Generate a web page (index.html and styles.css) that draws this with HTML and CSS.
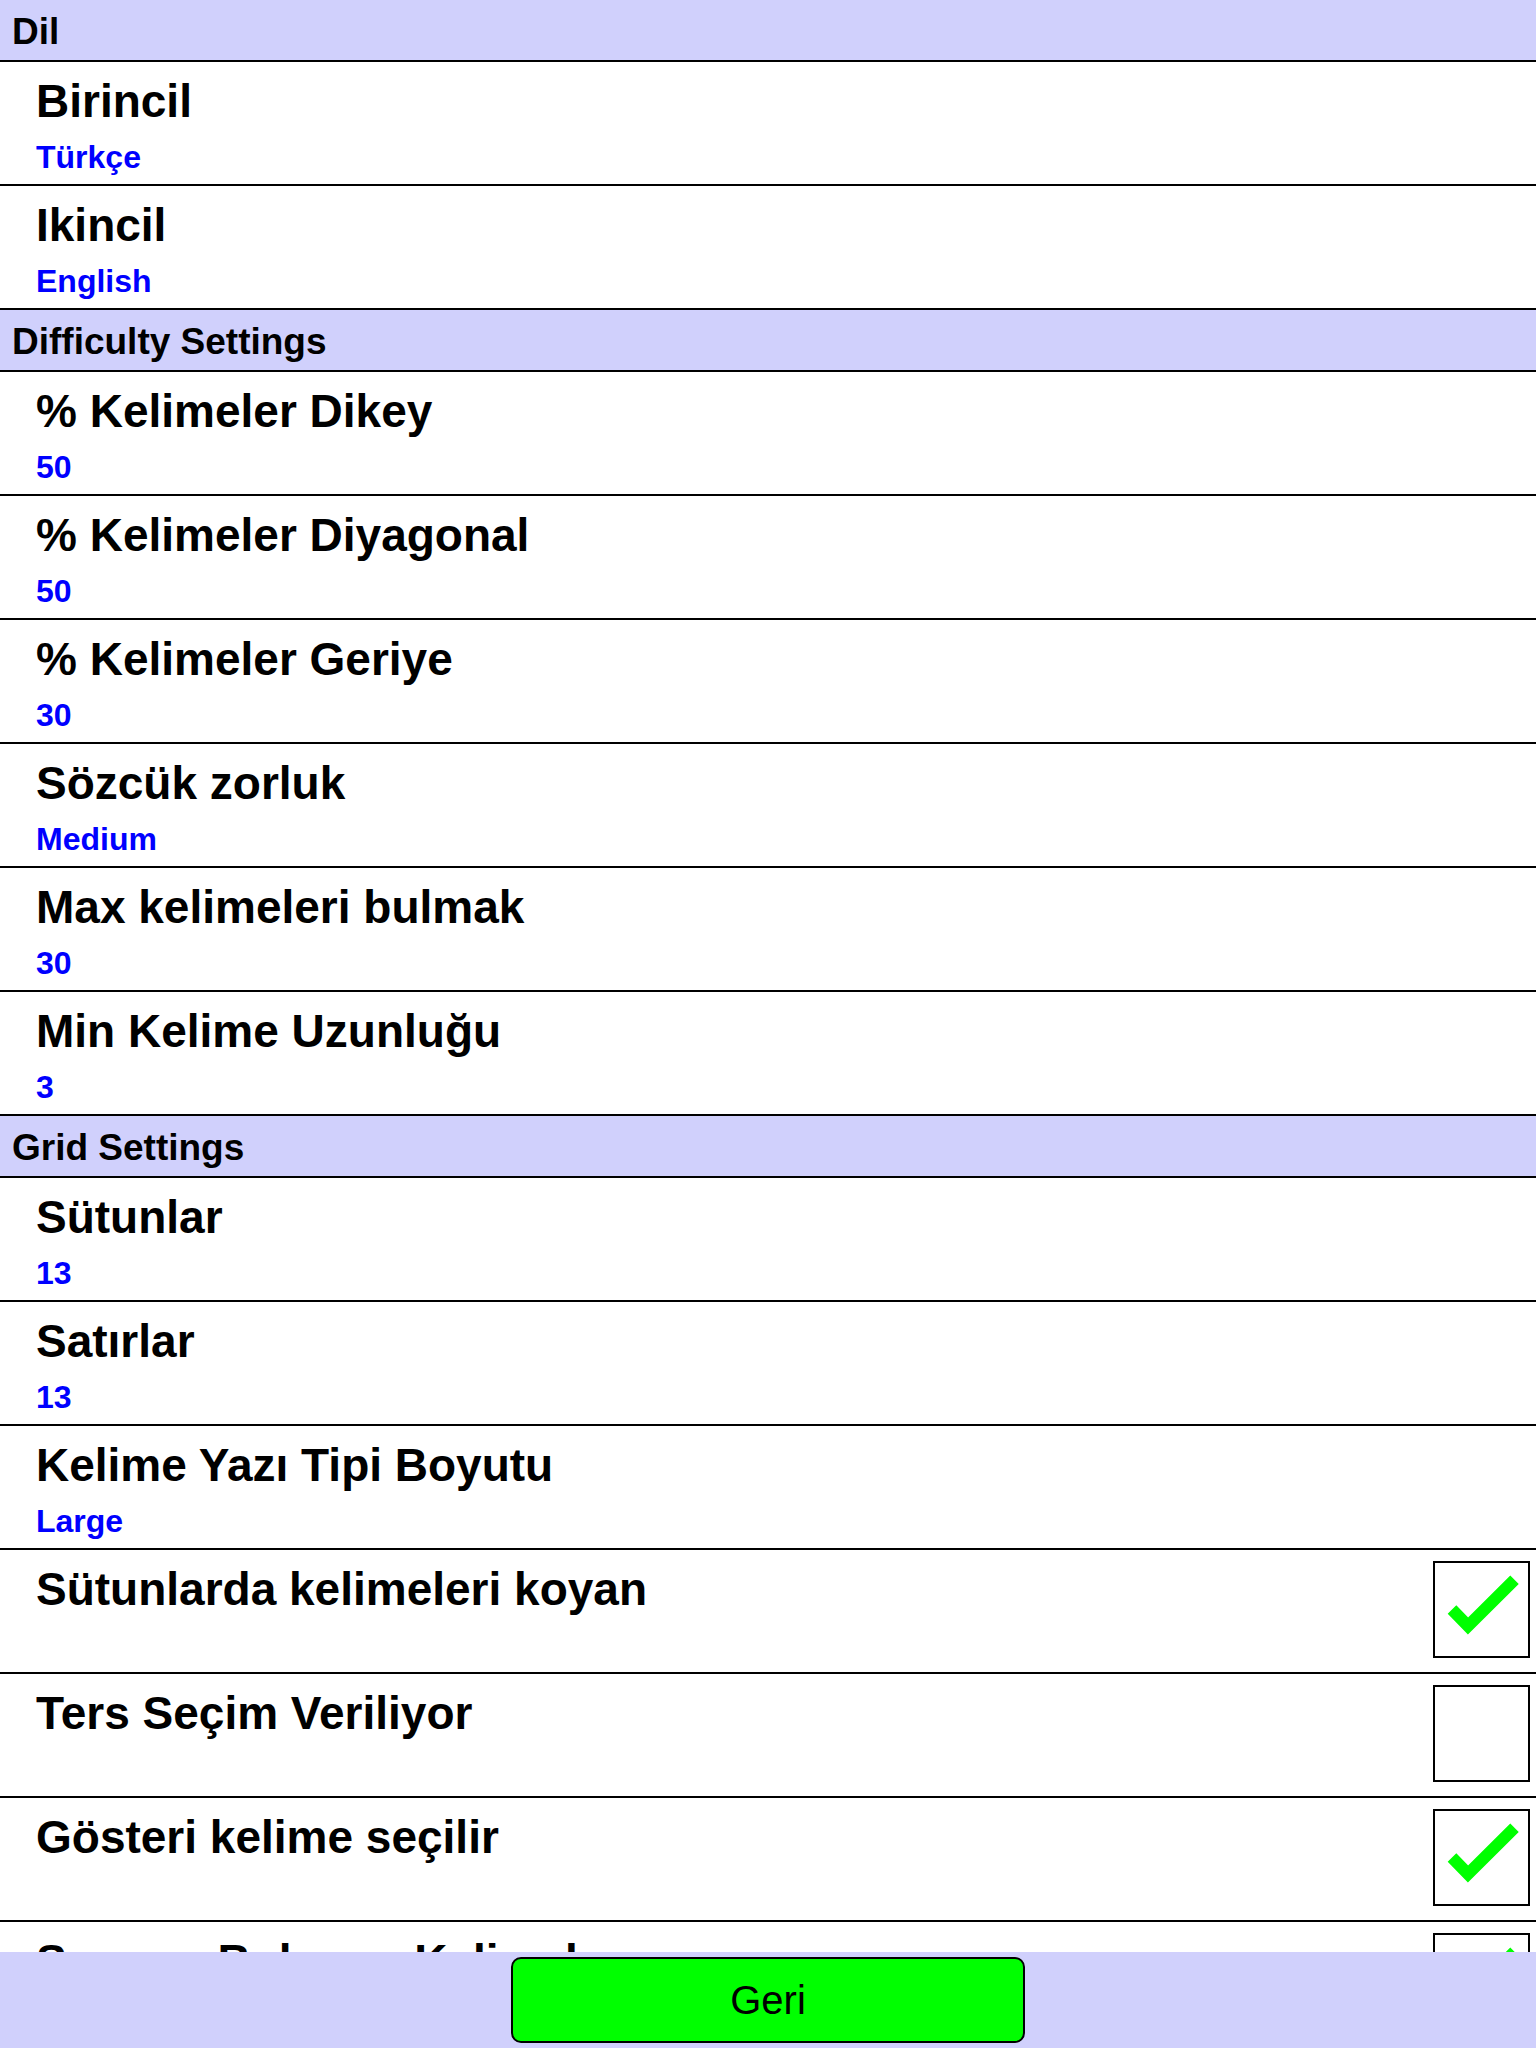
FILE: index.html
```html
<!DOCTYPE html>
<html lang="tr">

<head>
	<meta charset="UTF-8">
	<meta name="viewport" content="width=device-width, initial-scale=1.0">
	<title>Ayarlar</title>
	<link rel="stylesheet" href="styles.css">
</head>

<body>
	<div class="settings">
		<div class="section">Dil</div>
		<div class="row">
			<div class="text">
				<div class="title">Birincil</div>
				<div class="value">Türkçe</div>
			</div>
		</div>
		<div class="row">
			<div class="text">
				<div class="title">Ikincil</div>
				<div class="value">English</div>
			</div>
		</div>

		<div class="section">Difficulty Settings</div>
		<div class="row">
			<div class="text">
				<div class="title">% Kelimeler Dikey</div>
				<div class="value">50</div>
			</div>
		</div>
		<div class="row">
			<div class="text">
				<div class="title">% Kelimeler Diyagonal</div>
				<div class="value">50</div>
			</div>
		</div>
		<div class="row">
			<div class="text">
				<div class="title">% Kelimeler Geriye</div>
				<div class="value">30</div>
			</div>
		</div>
		<div class="row">
			<div class="text">
				<div class="title">Sözcük zorluk</div>
				<div class="value">Medium</div>
			</div>
		</div>
		<div class="row">
			<div class="text">
				<div class="title">Max kelimeleri bulmak</div>
				<div class="value">30</div>
			</div>
		</div>
		<div class="row">
			<div class="text">
				<div class="title">Min Kelime Uzunluğu</div>
				<div class="value">3</div>
			</div>
		</div>

		<div class="section">Grid Settings</div>
		<div class="row">
			<div class="text">
				<div class="title">Sütunlar</div>
				<div class="value">13</div>
			</div>
		</div>
		<div class="row">
			<div class="text">
				<div class="title">Satırlar</div>
				<div class="value">13</div>
			</div>
		</div>
		<div class="row">
			<div class="text">
				<div class="title">Kelime Yazı Tipi Boyutu</div>
				<div class="value">Large</div>
			</div>
		</div>
		<div class="row">
			<div class="text">
				<div class="title">Sütunlarda kelimeleri koyan</div>
			</div>
			<div class="checkbox">
				<svg class="check" viewBox="0 0 93 93" width="93" height="93">
					<polyline points="17,46.5 33,63 79.5,16.8" />
				</svg>
			</div>
		</div>
		<div class="row">
			<div class="text">
				<div class="title">Ters Seçim Veriliyor</div>
			</div>
			<div class="checkbox"></div>
		</div>
		<div class="row">
			<div class="text">
				<div class="title">Gösteri kelime seçilir</div>
			</div>
			<div class="checkbox">
				<svg class="check" viewBox="0 0 93 93" width="93" height="93">
					<polyline points="17,46.5 33,63 79.5,16.8" />
				</svg>
			</div>
		</div>
		<div class="row">
			<div class="text">
				<div class="title">Sonucu Bulunan Kelimeler</div>
			</div>
			<div class="checkbox">
				<svg class="check" viewBox="0 0 93 93" width="93" height="93">
					<polyline points="17,46.5 33,63 79.5,16.8" />
				</svg>
			</div>
		</div>
	</div>

	<div class="footer">
		<button class="btn" type="button">Geri</button>
	</div>
</body>

</html>
```

FILE: styles.css
```css
* {
	margin: 0;
	padding: 0;
	box-sizing: border-box;
}

body {
	font-family: 'Liberation Sans', Arial, sans-serif;
	background: white;
	color: #000;
	height: 100vh;
	display: flex;
	flex-direction: column;
	overflow: hidden;
}

.settings {
	flex: 1;
	overflow: hidden;
}

.section {
	height: 62px;
	background: #d0d0fc;
	border-bottom: 2px solid #000;
	padding: 4px 0 0 12px;
	font-size: 37px;
	font-weight: bold;
	line-height: 56px;
}

.row {
	height: 124px;
	border-bottom: 2px solid #000;
	display: flex;
	justify-content: space-between;
	align-items: flex-start;
}

.text {
	padding: 14px 0 0 36px;
}

.title {
	font-size: 46px;
	font-weight: bold;
	line-height: 50px;
	white-space: nowrap;
}

.value {
	margin-top: 14px;
	font-size: 32px;
	font-weight: bold;
	line-height: 34px;
	color: #0000ff;
}

.checkbox {
	width: 97px;
	height: 97px;
	margin: 11px 6px 0 0;
	border: 2px solid #000;
	background: white;
}

.check {
	display: block;
}

.check polyline {
	fill: none;
	stroke: #00ff00;
	stroke-width: 12;
	stroke-linejoin: miter;
	stroke-linecap: butt;
}

.footer {
	height: 96px;
	flex-shrink: 0;
	background: #d0d0fc;
	display: flex;
	align-items: center;
	justify-content: center;
}

.btn {
	width: 514px;
	height: 86px;
	background: #00ff00;
	border: 2px solid #000;
	border-radius: 10px;
	font-family: 'Liberation Sans', Arial, sans-serif;
	font-size: 40px;
	color: #000;
	cursor: pointer;
}
```
